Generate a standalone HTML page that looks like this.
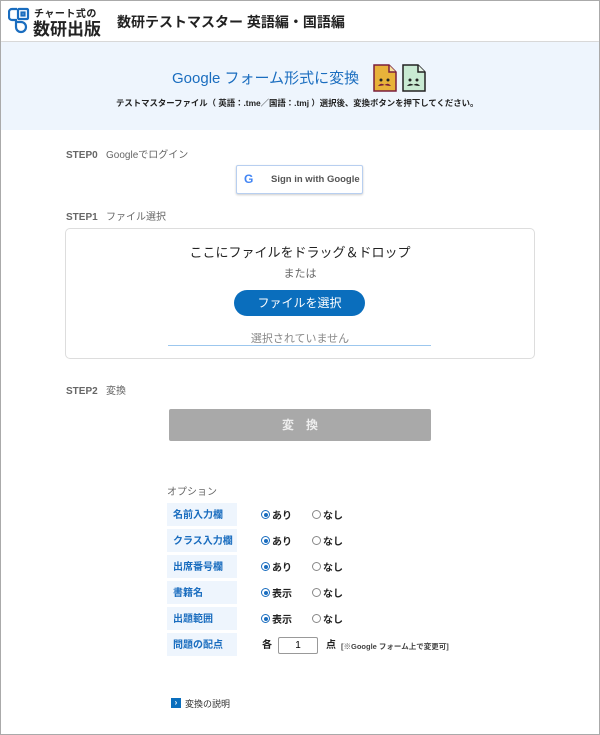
<!DOCTYPE html><html><head><meta charset="utf-8"><style>
*{margin:0;padding:0;box-sizing:border-box}
body{width:600px;height:735px;overflow:hidden;background:#fff;font-family:"Liberation Sans","Noto Sans CJK JP",sans-serif;position:relative}
.a{position:absolute;white-space:nowrap}
.frame{position:absolute;left:0;top:0;width:600px;height:735px;border:1px solid #aaa;pointer-events:none}
.lbl{position:absolute;left:167px;width:70px;height:23px;background:#eef5fd;color:#1a6dbf;font-size:10px;font-weight:bold;padding-left:6px;padding-top:7px;line-height:12px}
.rad{position:absolute;width:9px;height:9px;border-radius:50%;border:1px solid #888;background:#fff}
.rad.on{border-color:#1a6dbf}
.rad.on:after{content:"";position:absolute;left:1.5px;top:1.5px;width:4px;height:4px;border-radius:50%;background:#1a6dbf}
.rt{position:absolute;font-size:10px;font-weight:bold;color:#222;line-height:12px;margin-top:2px}
</style></head><body>
<div class="a" style="left:0;top:0;width:600px;height:41px;background:#fff;box-shadow:0 1px 3px rgba(0,0,0,.25)"></div>
<svg class="a" style="left:8px;top:7px" width="22" height="27" viewBox="0 0 22 27"><g fill="none" stroke="#1a6dbf" stroke-width="2.2"><path d="M9 2H4a3 3 0 0 0-3 3v5a3 3 0 0 0 3 3h5"/><rect x="10" y="2" width="10" height="10" rx="1"/><rect x="13.5" y="5.5" width="3" height="3"/><path d="M8 13v7a5 5 0 0 0 10 0 5 5 0 0 0-5-5H8"/></g></svg>
<div class="a" style="left:34px;top:5px;font-size:10px;font-weight:bold;color:#222;letter-spacing:.5px">チャート式の</div>
<div class="a" style="left:33px;top:15px;font-size:17px;font-weight:bold;color:#222">数研出版</div>
<div class="a" style="left:117px;top:12px;font-size:14px;font-weight:bold;color:#222">数研テストマスター 英語編・国語編</div>
<div class="a" style="left:0;top:42px;width:600px;height:88px;background:#eef5fd"></div>
<div class="a" style="left:172px;top:67px;font-size:15px;color:#1a6dbf">Google フォーム形式に変換</div>
<svg class="a" style="left:373px;top:64px" width="24" height="28" viewBox="0 0 24 28"><path d="M1 1h15l7 7v19H1z" fill="#e8b23a" stroke="#7a1f3d" stroke-width="1.5"/><path d="M16 1v7h7" fill="#f5e0a0" stroke="#7a1f3d" stroke-width="1.5"/><circle cx="8" cy="16" r="1.5" fill="#222"/><circle cx="15" cy="16" r="1.5" fill="#222"/><path d="M5 22q3-4 6.5-1 3.5-3 6.5 1-3 0-6.5-1-3.5 1-6.5 1z" fill="#7a1f3d"/></svg>
<svg class="a" style="left:402px;top:64px" width="24" height="28" viewBox="0 0 24 28"><path d="M1 1h15l7 7v19H1z" fill="#c9ead3" stroke="#222" stroke-width="1.5"/><path d="M16 1v7h7" fill="#e8f5ea" stroke="#222" stroke-width="1.5"/><circle cx="8" cy="16" r="1.5" fill="#222"/><circle cx="15" cy="16" r="1.5" fill="#222"/><path d="M5 22q3-4 6.5-1 3.5-3 6.5 1-3 0-6.5-1-3.5 1-6.5 1z" fill="#222"/></svg>
<div class="a" style="left:116px;top:97px;font-size:8.4px;color:#222;font-weight:bold">テストマスターファイル（ 英語：.tme／国語：.tmj ）選択後、変換ボタンを押下してください。</div>
<div class="a" style="left:66px;top:146px;font-size:10px;color:#666"><b>STEP0</b>&nbsp;&nbsp;&nbsp;Googleでログイン</div>
<div class="a" style="left:236px;top:165px;width:127px;height:29px;border:1px solid #b8cff0;border-radius:2px;box-shadow:0 1px 2px rgba(0,0,0,.2);background:#fff"></div>
<div class="a" style="left:244px;top:172px;font-size:12px;font-weight:bold"><span style="color:#4285f4">G</span></div>
<div class="a" style="left:271px;top:174px;font-size:9.5px;font-weight:bold;color:#555">Sign in with Google</div>
<div class="a" style="left:66px;top:208px;font-size:10px;color:#666"><b>STEP1</b>&nbsp;&nbsp;&nbsp;ファイル選択</div>
<div class="a" style="left:65px;top:228px;width:470px;height:131px;border:1px solid #ddd;border-radius:5px"></div>
<div class="a" style="left:0;width:600px;text-align:center;top:242px;font-size:13px;color:#222">ここにファイルをドラッグ＆ドロップ</div>
<div class="a" style="left:0;width:600px;text-align:center;top:265px;font-size:11px;color:#666">または</div>
<div class="a" style="left:234px;top:290px;width:131px;height:26px;border-radius:13px;background:#0a6ebd;color:#fff;font-size:12px;text-align:center;line-height:26px">ファイルを選択</div>
<div class="a" style="left:0;width:600px;text-align:center;top:330px;font-size:11px;color:#888">選択されていません</div>
<div class="a" style="left:168px;top:345px;width:263px;height:1px;background:#9cc7ee"></div>
<div class="a" style="left:66px;top:382px;font-size:10px;color:#666"><b>STEP2</b>&nbsp;&nbsp;&nbsp;変換</div>
<div class="a" style="left:169px;top:409px;width:262px;height:32px;background:#a9a9a9;border-radius:2px;color:#eee;font-size:12px;font-weight:bold;text-align:center;line-height:32px;letter-spacing:12px;padding-left:12px">変換</div>
<div class="a" style="left:167px;top:483px;font-size:10px;color:#666">オプション</div>
<div class="lbl" style="top:503px">名前入力欄</div>
<div class="lbl" style="top:529px">クラス入力欄</div>
<div class="lbl" style="top:555px">出席番号欄</div>
<div class="lbl" style="top:581px">書籍名</div>
<div class="lbl" style="top:607px">出題範囲</div>
<div class="lbl" style="top:633px">問題の配点</div>
<div class="rad on" style="left:261px;top:510px"></div><div class="rt" style="left:272px;top:509px">あり</div><div class="rad" style="left:312px;top:510px"></div><div class="rt" style="left:323px;top:509px">なし</div>
<div class="rad on" style="left:261px;top:536px"></div><div class="rt" style="left:272px;top:535px">あり</div><div class="rad" style="left:312px;top:536px"></div><div class="rt" style="left:323px;top:535px">なし</div>
<div class="rad on" style="left:261px;top:562px"></div><div class="rt" style="left:272px;top:561px">あり</div><div class="rad" style="left:312px;top:562px"></div><div class="rt" style="left:323px;top:561px">なし</div>
<div class="rad on" style="left:261px;top:588px"></div><div class="rt" style="left:272px;top:587px">表示</div><div class="rad" style="left:312px;top:588px"></div><div class="rt" style="left:323px;top:587px">なし</div>
<div class="rad on" style="left:261px;top:614px"></div><div class="rt" style="left:272px;top:613px">表示</div><div class="rad" style="left:312px;top:614px"></div><div class="rt" style="left:323px;top:613px">なし</div>
<div class="rt" style="left:262px;top:638px">各</div>
<div class="a" style="left:278px;top:637px;width:40px;height:17px;border:1px solid #999;border-radius:2px;font-size:10px;text-align:center;line-height:15px">1</div>
<div class="rt" style="left:326px;top:638px">点</div>
<div class="a" style="left:341px;top:641px;font-size:7.5px;color:#444;font-weight:bold">[※Google フォーム上で変更可]</div>
<div class="a" style="left:171px;top:698px;width:10px;height:10px;background:#0a6ebd;color:#fff;font-size:8px;line-height:10px;text-align:center;font-weight:bold">›</div>
<div class="a" style="left:185px;top:697px;font-size:9px;color:#333">変換の説明</div>
<div class="frame"></div>
</body></html>
